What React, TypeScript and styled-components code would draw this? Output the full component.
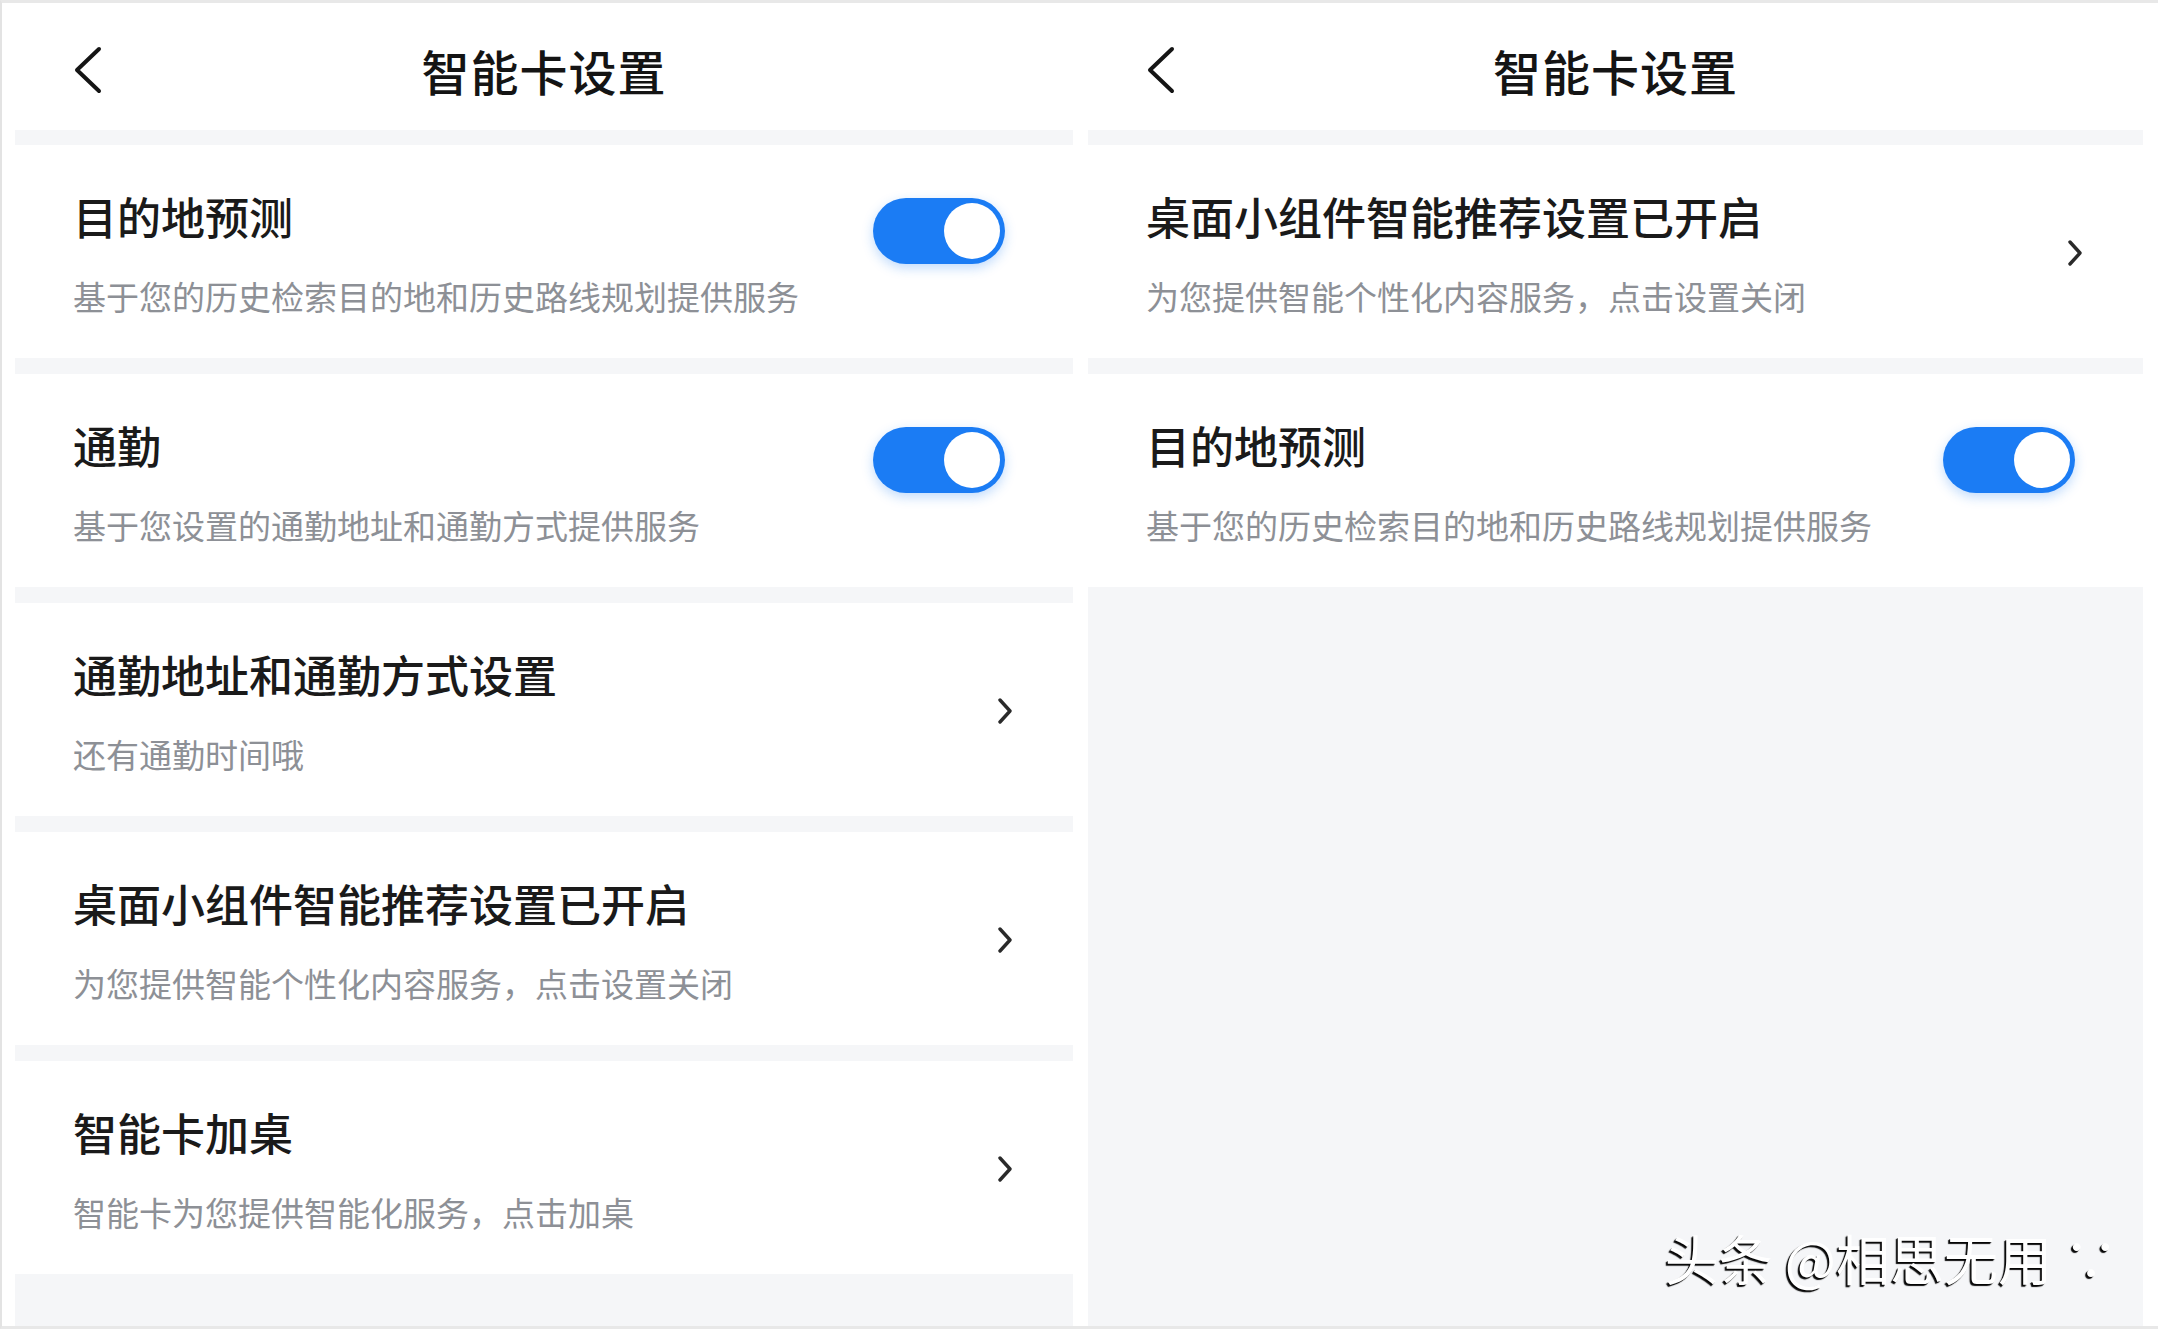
import styled, { createGlobalStyle } from "styled-components";

const GlobalStyle = createGlobalStyle`
  html, body {
    margin: 0;
    padding: 0;
    background: #ffffff;
  }
  body {
    font-family: "Noto Sans CJK SC", "Noto Sans", sans-serif;
  }
`;

interface SettingItem {
  title: string;
  desc: string;
  kind: "toggle" | "link";
}

const leftItems: Array<SettingItem> = [
  { title: "目的地预测", desc: "基于您的历史检索目的地和历史路线规划提供服务", kind: "toggle" },
  { title: "通勤", desc: "基于您设置的通勤地址和通勤方式提供服务", kind: "toggle" },
  { title: "通勤地址和通勤方式设置", desc: "还有通勤时间哦", kind: "link" },
  { title: "桌面小组件智能推荐设置已开启", desc: "为您提供智能个性化内容服务，点击设置关闭", kind: "link" },
  { title: "智能卡加桌", desc: "智能卡为您提供智能化服务，点击加桌", kind: "link" },
];

const rightItems: Array<SettingItem> = [
  { title: "桌面小组件智能推荐设置已开启", desc: "为您提供智能个性化内容服务，点击设置关闭", kind: "link" },
  { title: "目的地预测", desc: "基于您的历史检索目的地和历史路线规划提供服务", kind: "toggle" },
];

const BackIcon = () => (
  <svg width="30" height="48" viewBox="0 0 30 48" fill="none">
    <polyline
      points="26,3 4,24 26,45"
      stroke="#151515"
      strokeWidth="4"
      strokeLinecap="round"
      strokeLinejoin="round"
    />
  </svg>
);

const ChevronIcon = () => (
  <svg width="14" height="26" viewBox="0 0 14 26" fill="none">
    <polyline
      points="2,2 12,13 2,24"
      stroke="#2a2a2a"
      strokeWidth="3.4"
      strokeLinecap="round"
      strokeLinejoin="round"
    />
  </svg>
);

const SettingsPanel = ({ items, side }: { items: Array<SettingItem>; side: "left" | "right" }) => (
  <Panel $side={side}>
    <Header>
      <BackButton>
        <BackIcon />
      </BackButton>
      <HeaderTitle>智能卡设置</HeaderTitle>
    </Header>
    <Body>
      {items.map((item) => (
        <Card key={item.title}>
          <TextBlock>
            <CardTitle>{item.title}</CardTitle>
            <CardDesc>{item.desc}</CardDesc>
          </TextBlock>
          {item.kind === "toggle" ? (
            <Toggle>
              <Knob />
            </Toggle>
          ) : (
            <Arrow>
              <ChevronIcon />
            </Arrow>
          )}
        </Card>
      ))}
    </Body>
  </Panel>
);

export default function App(): JSX.Element {
  return (
    <>
      <GlobalStyle />
      <Screen>
        <SettingsPanel items={leftItems} side="left" />
        <SettingsPanel items={rightItems} side="right" />
        <Watermark>头条 @相思无用 ∵</Watermark>
      </Screen>
    </>
  );
}

const Screen = styled.div`
  position: relative;
  display: flex;
  width: 2158px;
  height: 1329px;
  box-sizing: border-box;
  border-top: 3px solid #e8e8e8;
  border-left: 2px solid #e3e3e3;
  border-bottom: 3px solid #e8e8e8;
  overflow: hidden;
  background: #ffffff;
`;

const Panel = styled.div<{ $side: "left" | "right" }>`
  display: flex;
  flex-direction: column;
  width: 1078px;
  box-sizing: border-box;
  padding: ${(p) => (p.$side === "left" ? "0 7px 0 13px" : "0 15px 0 8px")};
  background: #ffffff;
`;

const Header = styled.div`
  position: relative;
  display: flex;
  align-items: center;
  justify-content: center;
  height: 127px;
  padding-top: 6px;
  box-sizing: border-box;
  flex-shrink: 0;
`;

const BackButton = styled.div`
  position: absolute;
  left: 58px;
  top: 43px;
  display: flex;
`;

const HeaderTitle = styled.div`
  font-size: 48px;
  font-weight: 500;
  color: #141414;
  letter-spacing: 1px;
`;

const Body = styled.div`
  flex: 1;
  display: flex;
  flex-direction: column;
  gap: 16px;
  padding-top: 15px;
  background: #f5f6f8;
`;

const Card = styled.div`
  display: flex;
  align-items: center;
  justify-content: space-between;
  height: 213px;
  box-sizing: border-box;
  padding: 43px 68px 40px 58px;
  background: #ffffff;
`;

const TextBlock = styled.div`
  display: flex;
  flex-direction: column;
`;

const CardTitle = styled.div`
  font-size: 44px;
  line-height: 56px;
  font-weight: 500;
  color: #1a1a1a;
`;

const CardDesc = styled.div`
  margin-top: 30px;
  font-size: 33px;
  line-height: 44px;
  color: #8d9096;
`;

const Toggle = styled.div`
  align-self: flex-start;
  margin-top: 10px;
  display: flex;
  align-items: center;
  justify-content: flex-end;
  width: 132px;
  height: 66px;
  padding: 0 5px;
  box-sizing: border-box;
  border-radius: 33px;
  background: #1b7cf4;
  box-shadow: 0 4px 12px rgba(27, 124, 244, 0.28);
`;

const Knob = styled.div`
  width: 56px;
  height: 56px;
  border-radius: 50%;
  background: #ffffff;
`;

const Arrow = styled.div`
  display: flex;
  margin-right: -7px;
`;

const Watermark = styled.div`
  position: absolute;
  right: 40px;
  bottom: 37px;
  font-size: 54px;
  line-height: 62px;
  color: #ffffff;
  text-shadow: -2px 2px 1px rgba(0, 0, 0, 0.95), -1px 1px 0 rgba(0, 0, 0, 0.6);
  white-space: pre;
`;
